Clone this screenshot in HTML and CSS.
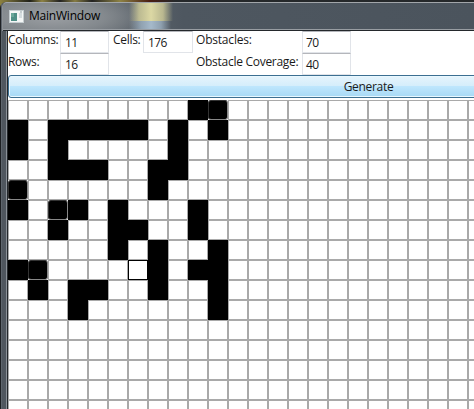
FILE: index.html
```html
<!DOCTYPE html>
<html lang="en">
<head>
<meta charset="utf-8">
<title>MainWindow</title>
<link rel="stylesheet" href="styles.css">
</head>
<body>
<div class="window">
  <header class="titlebar">
    <svg class="app-icon" width="16" height="14" viewBox="0 0 16 14">
      <rect x="0.5" y="0.5" width="14" height="12" fill="#f4f6f6" stroke="#c5cdd0"/>
      <rect x="2" y="3" width="6" height="8" fill="#4f8f86"/>
      <rect x="2" y="3" width="3" height="4" fill="#6aa79a"/>
      <rect x="10" y="3" width="3" height="5" fill="#d5dcdf"/>
      <path d="M11 2h2" stroke="#98a4aa"/>
    </svg>
    <span class="title">MainWindow</span>
  </header>
  <main class="client">
    <div class="form">
      <label class="columns">Columns:</label><div class="field">11</div>
      <label class="cells-label">Cells:</label><div class="field">176</div>
      <label class="obstacles">Obstacles:</label><div class="field">70</div>
      <label class="rows">Rows:</label><div class="field">16</div>
      <span></span><span></span>
      <label class="coverage">Obstacle Coverage:</label><div class="field">40</div>
    </div>
    <button class="generate">Generate</button>
    <div class="maze" id="maze"></div>
  </main>
</div>
<script src="maze.js"></script>
</body>
</html>
```
FILE: maze.js
```js
// # wall, o outlined wall, s start cell, . open cell
const rows = [
  ".........#o",
  "#.#####.#.#",
  "#.#.....#..",
  "..###..##..",
  "o......#...",
  "#.o#.#...#.",
  "..#..##..#.",
  ".....#.#..#",
  "#o....s#.##",
  ".#.##..#..#",
  "...#......#",
  "", "", "", "", ""
];
const kinds = { "#": "cell wall", "o": "cell wall outlined", "s": "cell start" };
const maze = document.getElementById("maze");
for (const row of rows) {
  for (let c = 0; c < 24; c++) {
    const cell = document.createElement("div");
    cell.className = kinds[row[c]] || "cell";
    maze.append(cell);
  }
}
```
FILE: styles.css
```css
* { box-sizing: border-box; }
html { background: #25282a; }
body {
  margin: 0;
  width: 474px;
  height: 409px;
  overflow: hidden;
  padding-top: 2px;
  background: linear-gradient(90deg, #8c8140, #1f2019 30px, #8d8244 42px, #222 60px, #857b42 75px, #222 92px, #8d8244 120px, #4a1d12 150px, #25282a 175px);
  font: 12px/16px "Open Sans", "Noto Sans", sans-serif;
  color: #1a1a1a;
}
.window {
  height: 407px;
  padding-left: 2px;
  border-top-left-radius: 6px;
  background: linear-gradient(90deg, #1d2023 0 1px, #5f666e 1px 2px, #50575f 2px 6px, #8b9198 6px 7px, #24282c 7px 8px, #fff 8px);
}
.titlebar {
  display: flex;
  align-items: flex-start;
  height: 29px;
  padding: 8px 0 0 6px;
  border-top: 1px solid #a2a6aa;
  border-left: 1px solid #8d9296;
  border-top-left-radius: 5px;
  box-shadow: inset 0 -1px #24282c, inset 0 -2px #989da2;
  background:
    linear-gradient(90deg, transparent 126px, #d2ce9acc 136px, #dcd8a4 148px, #d2ce9acc 160px, transparent 170px) 0 0 / 100% 18px no-repeat,
    linear-gradient(90deg, transparent 126px, #9db1c2cc 138px, #a5b9ca 148px, #9db1c2cc 158px, transparent 168px) 0 18px / 100% 10px no-repeat,
    radial-gradient(ellipse 95px 26px at 50px 14px, #9b9fa3 0, #8b9094cc 55%, transparent 100%),
    linear-gradient(90deg, #70767c, #646b72 110px, #4e5760 180px, #4b545d);
}
.app-icon { flex: none; margin-top: -1px; }
.title { margin: -3px 0 0 4px; letter-spacing: -0.22px; color: #000; }
.client { margin-left: 6px; width: 466px; height: 378px; overflow: hidden; background: #fff; }
.form {
  display: grid;
  grid-template-columns: 52px 49px 34px 50px 109px 49px;
  grid-template-rows: 22px 22px;
  height: 44px;
}
.form label { white-space: nowrap; padding-top: 1px; }
.form .columns { letter-spacing: -0.25px; }
.form .rows { letter-spacing: -0.3px; }
.form .cells-label { padding-left: 4px; letter-spacing: -0.3px; }
.form .obstacles, .form .coverage { padding-left: 1px; letter-spacing: -0.2px; margin-left: 2px; }
.form .coverage { letter-spacing: -0.28px; }
.form .field {
  height: 22px;
  padding: 3px 0 0 4px;
  border: 1px solid #e1e4e9;
  border-top-color: #b4b6bb;
  letter-spacing: -0.6px;
}
.form .obstacles + .field, .form .coverage + .field { padding-left: 3px; }
.generate {
  display: block;
  width: 721px;
  height: 23px;
  padding: 0;
  border: 1px solid #3c6f91;
  border-radius: 3px;
  box-shadow: inset 0 0 0 1px #e8f8ff;
  background: linear-gradient(#e6f4fc 0, #d4edfb 50%, #bee6fd 50%, #a7d9f5 100%);
  font: inherit;
  color: #1a1a1a;
  letter-spacing: -0.3px;
}
.maze {
  display: grid;
  grid-template-columns: repeat(24, 20px);
  grid-auto-rows: 20px;
  margin-top: 2px;
}
.cell { border: 1px solid #a9a9a9; }
.wall { background: #000; border-color: #000; }
.outlined { border-color: #333 #888 #888 #333; border-radius: 3px; }
.start { border-color: #000; }
```
